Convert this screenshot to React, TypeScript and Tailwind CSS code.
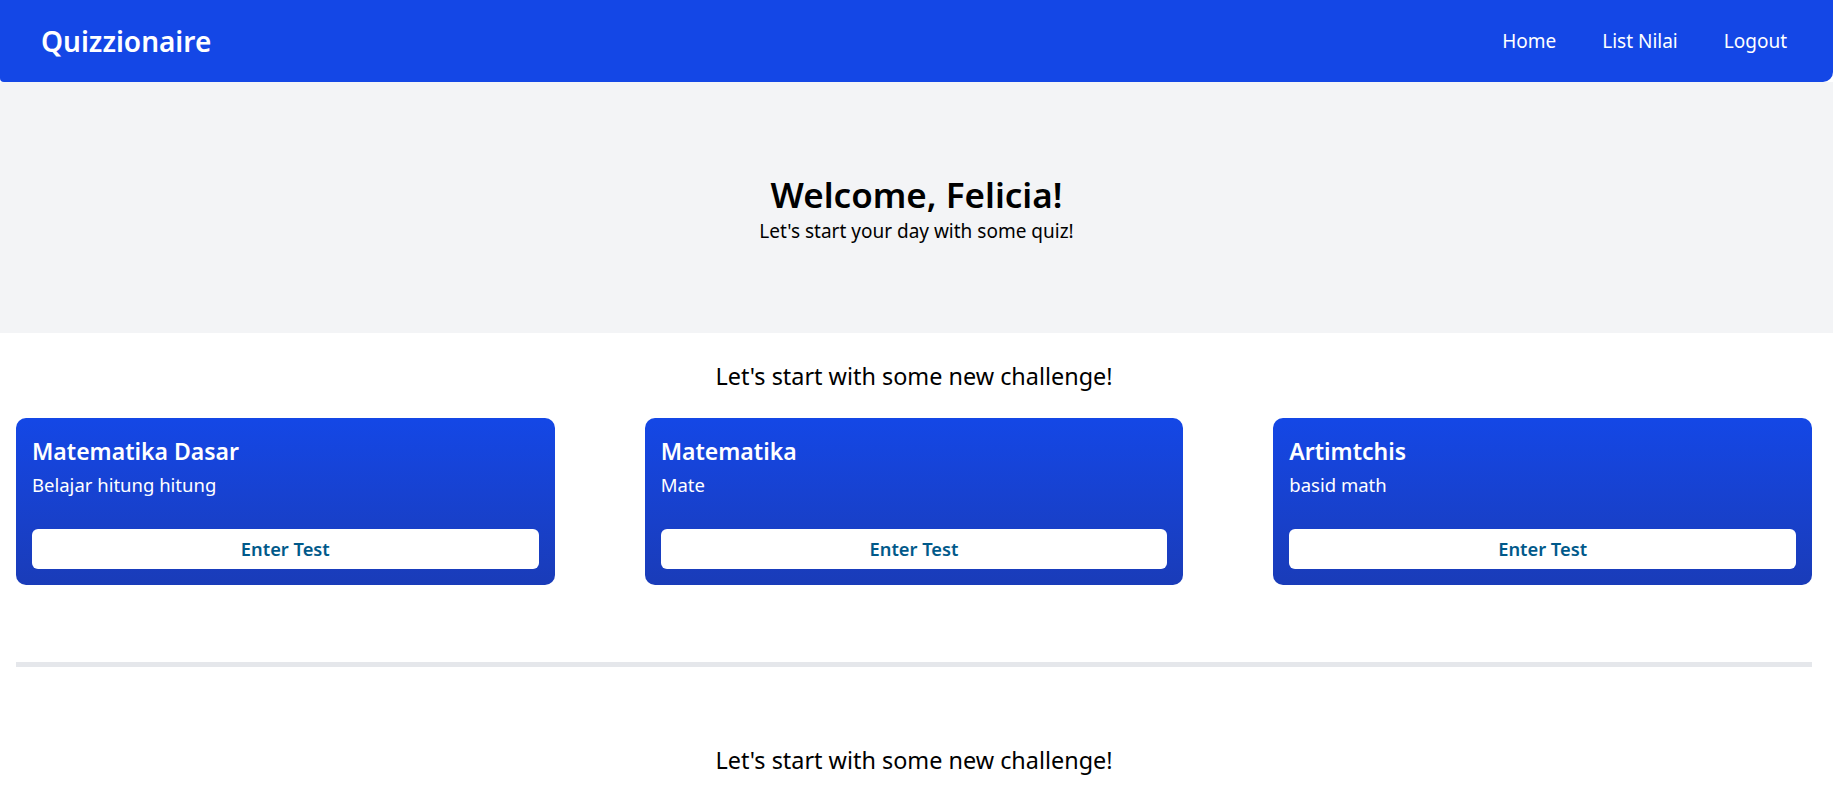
import React from "react";

const quizzes = [
  { title: "Matematika Dasar", desc: "Belajar hitung hitung" },
  { title: "Matematika", desc: "Mate" },
  { title: "Artimtchis", desc: "basid math" },
];

export default function App() {
  return (
    <div
      className="min-h-screen bg-white text-black"
      style={{ fontFamily: '"Noto Sans", "Open Sans", sans-serif' }}
    >
      <nav className="flex h-[82px] items-center justify-between rounded-br-[10px] rounded-bl-[4px] bg-blue-700 pl-[41px] pr-[46px] text-white">
        <span className="text-[28px] font-semibold leading-none">Quizzionaire</span>
        <div className="flex items-center gap-[46px] text-[19px]">
          <a>Home</a>
          <a>List Nilai</a>
          <a>Logout</a>
        </div>
      </nav>

      <section className="flex h-[251px] flex-col items-center justify-center bg-gray-100 pt-[2px]">
        <h1 className="text-[35px] font-semibold leading-[44px]">Welcome, Felicia!</h1>
        <p className="text-[19px] leading-[28px]">Let's start your day with some quiz!</p>
      </section>

      <main className="pl-4 pr-[21px]">
        <h2 className="mt-[26px] text-center text-[23.4px] leading-[34px]">
          Let's start with some new challenge!
        </h2>
        <div className="mt-[25px] grid grid-cols-3 gap-[90px]">
          {quizzes.map((q) => (
            <div
              key={q.title}
              className="flex flex-col rounded-[10px] bg-linear-to-b from-blue-700 to-blue-800 p-4 text-white"
            >
              <h3 className="text-[23px] font-semibold leading-[35px]">{q.title}</h3>
              <p className="text-[18.5px] leading-[31px]">{q.desc}</p>
              <button className="mt-[29px] h-[40px] rounded-[6px] bg-white text-[18.3px] font-semibold text-sky-800">
                Enter Test
              </button>
            </div>
          ))}
        </div>
        <hr className="mt-[77px] h-[5px] border-0 bg-gray-200" />
        <h2 className="mt-[76px] text-center text-[23.4px] leading-[34px]">
          Let's start with some new challenge!
        </h2>
      </main>
    </div>
  );
}
